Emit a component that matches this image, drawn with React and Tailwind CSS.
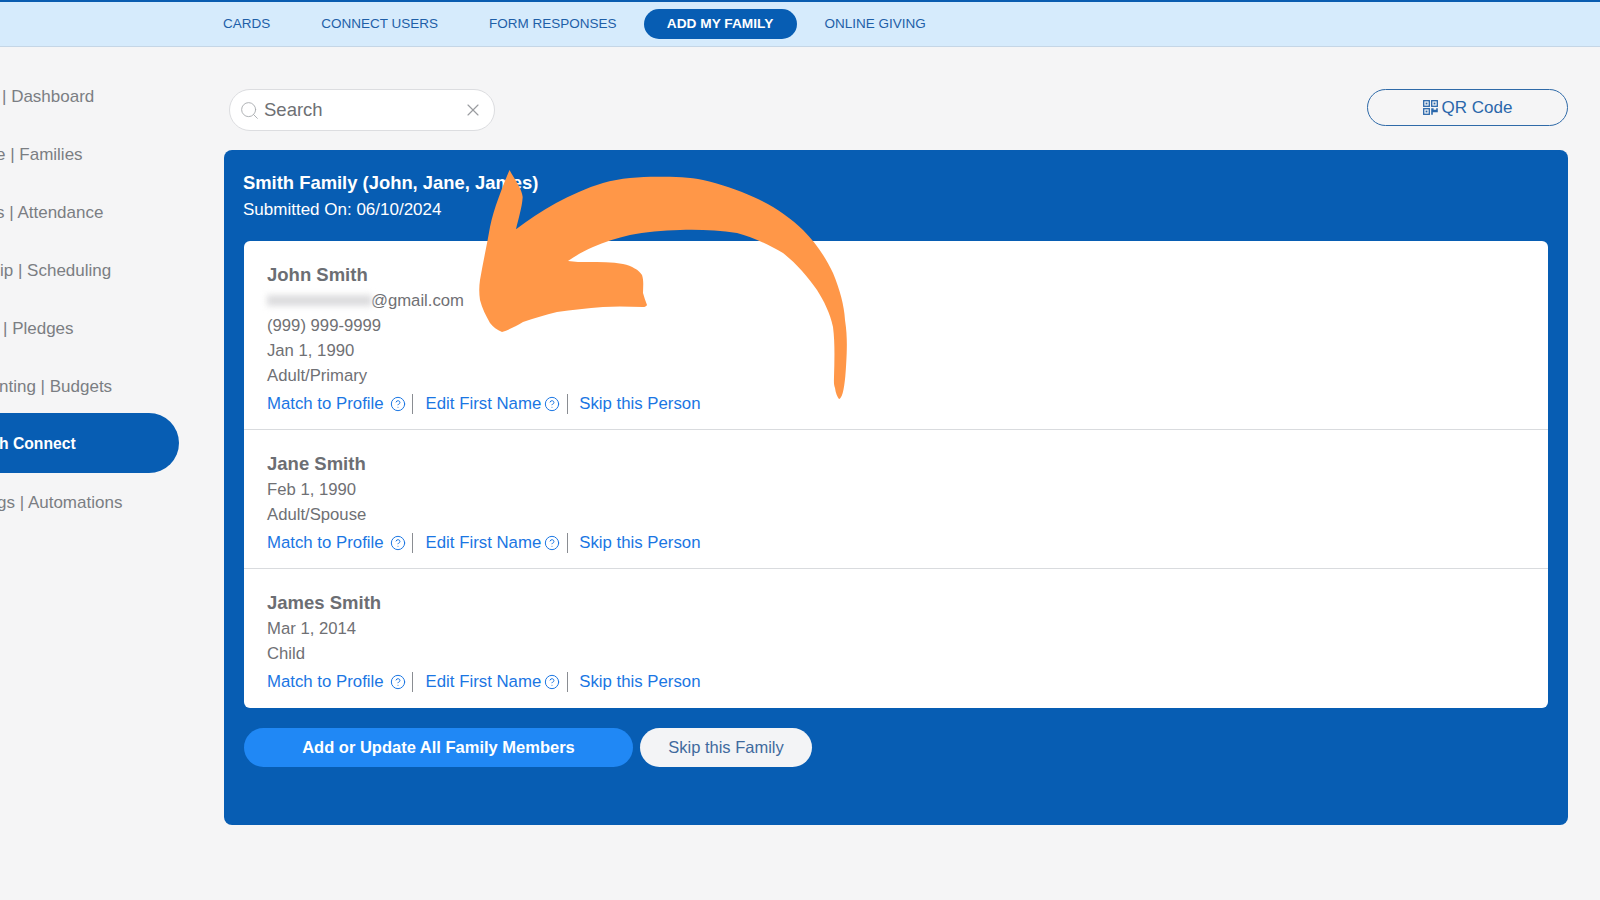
import { CircleHelp, Search, X } from 'lucide-react'

const tabs = ['CARDS', 'CONNECT USERS', 'FORM RESPONSES', 'ADD MY FAMILY', 'ONLINE GIVING']

const menu = [
  { text: '| Dashboard', cls: 'ml-[2px]' },
  { text: 'e | Families', cls: 'ml-[-4px]' },
  { text: 's | Attendance', cls: 'ml-[-4px]' },
  { text: 'ip | Scheduling', cls: 'ml-0' },
  { text: '| Pledges', cls: 'ml-[3px]' },
  { text: 'nting | Budgets', cls: 'ml-[-1px]' },
  { text: 'h Connect', active: true },
  { text: 'gs | Automations', cls: 'ml-[-3px]' },
]

function QrIcon() {
  return (
    <svg width="15" height="15" viewBox="0 0 15 15" className="mr-[4px]">
      <g fill="none" stroke="#2a67ab" strokeWidth="1.3">
        <rect x="0.7" y="0.7" width="5.6" height="5.6" />
        <rect x="8.7" y="0.7" width="5.6" height="5.6" />
        <rect x="0.7" y="8.7" width="5.6" height="5.6" />
      </g>
      <g fill="#2a67ab">
        <rect x="2.6" y="2.6" width="1.8" height="1.8" />
        <rect x="10.6" y="2.6" width="1.8" height="1.8" />
        <rect x="2.6" y="10.6" width="1.8" height="1.8" />
        <path d="M8.2 8.2h2.4v1.6h2.6v-1.6h1.6v4h-5v2.6h-1.6z" />
      </g>
    </svg>
  )
}

function Links() {
  return (
    <div className="mt-[2px] flex h-[27px] items-center text-[16.8px] text-[#1a76e3]">
      <span>Match to Profile</span>
      <CircleHelp size={16} className="ml-[6px]" strokeWidth={1.5} />
      <span className="ml-[6px] mr-[13px] h-[20px] w-px bg-[#8a8d92]" />
      <span>Edit First Name</span>
      <CircleHelp size={16} className="ml-[3px]" strokeWidth={1.5} />
      <span className="ml-[7px] mr-[11px] h-[20px] w-px bg-[#8a8d92]" />
      <span>Skip this Person</span>
    </div>
  )
}

function Person({ name, lines, email, last }) {
  return (
    <div className={'px-[23px] pt-[20px] ' + (last ? 'h-[139px]' : 'border-b border-[#d9dbde] ' + (email ? 'h-[189px]' : 'h-[139px]'))}>
      <div className="h-[27px] text-[18.5px] leading-[27px] font-bold text-[#6c6e73]">{name}</div>
      {email && (
        <div className="flex h-[25px] items-center text-[16.7px] text-[#6f7074]">
          <span className="mr-[-1px] h-[11px] w-[105px] bg-[#dcdcde] blur-[3px]" />
          <span>@gmail.com</span>
        </div>
      )}
      {lines.map((l) => (
        <div key={l} className="h-[25px] text-[16.7px] leading-[25px] text-[#6f7074]">{l}</div>
      ))}
      <Links />
    </div>
  )
}

export default function App() {
  return (
    <div className="relative h-[900px] w-[1600px] overflow-hidden bg-[#f5f5f6] font-['Liberation_Sans',Arial,sans-serif]">
      <div className="flex h-[47px] items-center border-t-2 border-b border-t-[#0a5cb0] border-b-[#c5d6e6] bg-[#d6ebfc] pl-[223px]">
        {tabs.map((t) => (
          t === 'ADD MY FAMILY' ? (
            <span key={t} className="mr-[28px] ml-[-24px] w-[153px] rounded-full bg-[#075db3] py-[7px] text-center text-[13.7px] leading-[16px] font-bold text-white">{t}</span>
          ) : (
            <span key={t} className="mr-[51px] text-[13.5px] leading-[16px] text-[#1e5fa8]">{t}</span>
          )
        ))}
      </div>

      <div className="flex">
        <div className="w-[224px] shrink-0 overflow-hidden pt-[21px]">
          {menu.map((m) => (
            <div key={m.text} className="flex h-[58px] items-center">
              {m.active ? (
                <div className="mb-[4px] flex h-[60px] w-[179px] items-center rounded-r-full bg-[#075db3] pt-[1px] text-[15.7px] font-bold text-white">
                  <span className="ml-[-1px]">{m.text}</span>
                </div>
              ) : (
                <div className={'whitespace-nowrap text-[17px] text-[#7b7e83] ' + m.cls}>{m.text}</div>
              )}
            </div>
          ))}
        </div>

        <div className="w-[1344px]">
          <div className="flex h-[103px] items-start justify-between pt-[42px]">
            <div className="ml-[5px] flex h-[42px] w-[266px] items-center rounded-full border border-[#dcdde0] bg-white pl-[9px] pr-[11px]">
              <Search size={21} strokeWidth={1} className="text-[#a5a8ac]" />
              <span className="ml-[4px] flex-1 text-[18.5px] text-[#6e7074]">Search</span>
              <X size={20} strokeWidth={1.4} className="text-[#9a9ca0]" />
            </div>
            <div className="flex h-[37px] w-[201px] items-center justify-center rounded-full border border-[#2f6aa8] text-[17px] text-[#2a67ab]">
              <QrIcon />
              QR Code
            </div>
          </div>

          <div className="h-[675px] rounded-[8px] bg-[#075db3] px-[20px] pt-[20px]">
            <div className="ml-[-1px] h-[27px] text-[18.4px] leading-[26px] font-bold text-white">Smith Family (John, Jane, James)</div>
            <div className="ml-[-1px] h-[25px] text-[17px] leading-[25px] text-white">Submitted On: 06/10/2024</div>
            <div className="mt-[19px] h-[467px] rounded-[6px] bg-white">
              <Person name="John Smith" email lines={['(999) 999-9999', 'Jan 1, 1990', 'Adult/Primary']} />
              <Person name="Jane Smith" lines={['Feb 1, 1990', 'Adult/Spouse']} />
              <Person name="James Smith" last lines={['Mar 1, 2014', 'Child']} />
            </div>
            <div className="mt-[20px] flex gap-[7px]">
              <div className="flex h-[39px] w-[389px] items-center justify-center rounded-full bg-[#2088f5] text-[16.5px] font-bold text-white">Add or Update All Family Members</div>
              <div className="flex h-[39px] w-[172px] items-center justify-center rounded-full bg-[#f3f4f6] text-[16.5px] text-[#3f6a9e]">Skip this Family</div>
            </div>
          </div>
        </div>
      </div>

      {/* arrow drawn over the page */}
      <svg className="absolute top-0 left-0" width="1600" height="900" viewBox="0 0 1600 900">
        <path
          fill="#ff9748"
          d="M509.5 170 C515 180 522 189 522.7 197 C522 208 518 220 516 229.3 C540 211 570 193 603 183 C620 178 640 176.7 657 176.7 C675 176.7 690 177 703 180 C720 184 738 190 753 196.7 C772 205 790 217 803 230 C816 243 826 258 833 273 C840 290 844 305 845 320 C847 333 847 343 846.7 353 C846 370 845 385 842.7 393 C841.5 397 840 399 839 399 C837.5 397 835.5 393 835 388 C833.5 384 834 380 834 377 C834.5 360 835 342 833 327 C830 313 824 301 817 290 C808 277 796 263 783 253 C768 244 752 237 737 233 C718 230 698 229.5 680 230 C663 230.5 645 232 630 235 C617 238 604 242 593 247 C584 251 575 256 568 261 C575 262 581 262 587 262 C600 262 612 262 623 264 C632 266 639 270 642 275 C644 281 643 287 643 293 C644 297 645.5 301 647 305 C646 306.5 645 307 643 307 C630 306.5 616 306 603 307 C587 308 572 310 557 312 C545 315 534 318 523 322 C516 326 509 330 502 332 C497 330 493 327 490 323 C486 316 482 308 480 300 C479 293 479 287 480 280 C483 262 487 245 490 227 C494 208 502 188 509.5 170 Z"
        />
      </svg>
    </div>
  )
}
